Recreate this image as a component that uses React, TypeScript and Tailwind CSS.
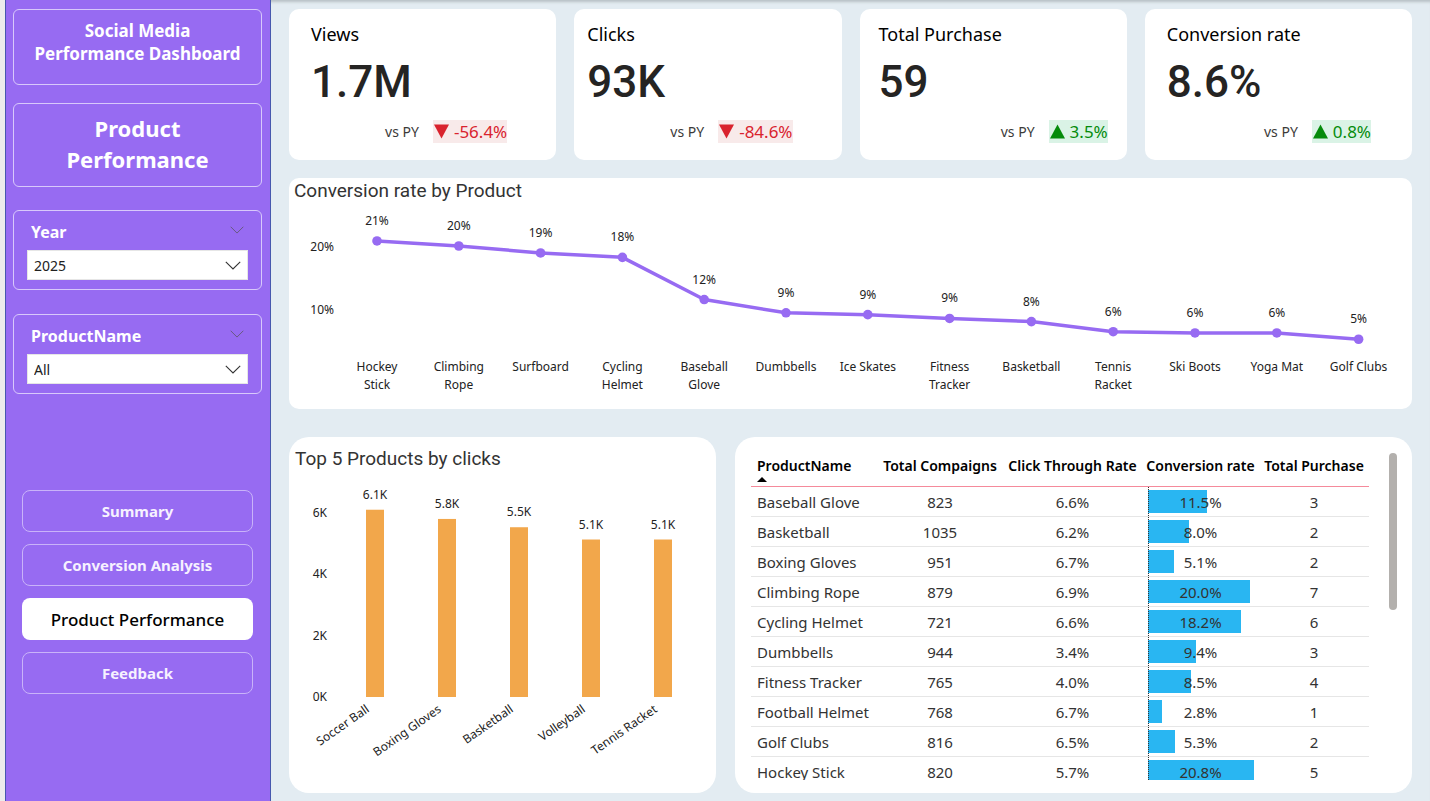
import { useState } from "react";

const kpis = [
  { title: "Views", value: "1.7M", change: "-56.4%", up: false, left: "pl-[22px]", right: "pr-[49px]" },
  { title: "Clicks", value: "93K", change: "-84.6%", up: false, left: "pl-[13px]", right: "pr-[49px]" },
  { title: "Total Purchase", value: "59", change: "3.5%", up: true, left: "pl-[19px]", right: "pr-[19px]" },
  { title: "Conversion rate", value: "8.6%", change: "0.8%", up: true, left: "pl-[22px]", right: "pr-[41px]" },
];

const conversion = [
  { name: ["Hockey", "Stick"], label: "21%", value: 20.8 },
  { name: ["Climbing", "Rope"], label: "20%", value: 20.0 },
  { name: ["Surfboard"], label: "19%", value: 18.9 },
  { name: ["Cycling", "Helmet"], label: "18%", value: 18.2 },
  { name: ["Baseball", "Glove"], label: "12%", value: 11.5 },
  { name: ["Dumbbells"], label: "9%", value: 9.4 },
  { name: ["Ice Skates"], label: "9%", value: 9.1 },
  { name: ["Fitness", "Tracker"], label: "9%", value: 8.5 },
  { name: ["Basketball"], label: "8%", value: 8.0 },
  { name: ["Tennis", "Racket"], label: "6%", value: 6.4 },
  { name: ["Ski Boots"], label: "6%", value: 6.2 },
  { name: ["Yoga Mat"], label: "6%", value: 6.2 },
  { name: ["Golf Clubs"], label: "5%", value: 5.2 },
];

const clicks = [
  { name: "Soccer Ball", label: "6.1K", value: 6.1 },
  { name: "Boxing Gloves", label: "5.8K", value: 5.8 },
  { name: "Basketball", label: "5.5K", value: 5.53 },
  { name: "Volleyball", label: "5.1K", value: 5.13 },
  { name: "Tennis Racket", label: "5.1K", value: 5.13 },
];

const rows = [
  { name: "Baseball Glove", campaigns: 823, ctr: "6.6%", rate: 11.5, purchase: 3 },
  { name: "Basketball", campaigns: 1035, ctr: "6.2%", rate: 8.0, purchase: 2 },
  { name: "Boxing Gloves", campaigns: 951, ctr: "6.7%", rate: 5.1, purchase: 2 },
  { name: "Climbing Rope", campaigns: 879, ctr: "6.9%", rate: 20.0, purchase: 7 },
  { name: "Cycling Helmet", campaigns: 721, ctr: "6.6%", rate: 18.2, purchase: 6 },
  { name: "Dumbbells", campaigns: 944, ctr: "3.4%", rate: 9.4, purchase: 3 },
  { name: "Fitness Tracker", campaigns: 765, ctr: "4.0%", rate: 8.5, purchase: 4 },
  { name: "Football Helmet", campaigns: 768, ctr: "6.7%", rate: 2.8, purchase: 1 },
  { name: "Golf Clubs", campaigns: 816, ctr: "6.5%", rate: 5.3, purchase: 2 },
  { name: "Hockey Stick", campaigns: 820, ctr: "5.7%", rate: 20.8, purchase: 5 },
];

const pages = ["Summary", "Conversion Analysis", "Product Performance", "Feedback"];

function Chevron({ className }: { className: string }) {
  return (
    <svg viewBox="0 0 16 9" fill="none" stroke="currentColor" className={className} aria-hidden="true">
      <path d="M0.8 0.8 8 8 15.2 0.8" strokeWidth="1.1" />
    </svg>
  );
}

function Slicer({ id, label, options }: { id: string; label: string; options: string[] }) {
  return (
    <div className="h-20 rounded-md border border-[#d8c9fb] px-[13px] pt-[7px]">
      <div className="flex items-center justify-between pr-1 pl-1">
        <label htmlFor={id} className="text-base leading-7 font-bold text-white">
          {label}
        </label>
        <Chevron className="mb-1 h-2 w-[14px] text-[#66597f]" />
      </div>
      <div className="relative mt-1">
        <select
          id={id}
          className="h-[30px] w-full appearance-none rounded-none border border-[#e6e6e6] bg-white px-1.5 pt-0.5 text-sm text-[#212121] outline-none"
        >
          {options.map((o) => (
            <option key={o}>{o}</option>
          ))}
        </select>
        <Chevron className="pointer-events-none absolute top-[11px] right-[7px] h-[9px] w-4 text-[#333]" />
      </div>
    </div>
  );
}

function Sidebar() {
  const [active, setActive] = useState("Product Performance");
  return (
    <aside className="w-[266px] shrink-0 border-x border-[#4658ae] bg-[#976bf2] pt-[9px] pr-2 pl-[7px]">
      <h1 className="h-[76px] rounded-md border border-[#d8c9fb] pt-[9px] text-center text-[17px] leading-[23px] font-bold text-white">
        Social Media
        <br />
        Performance Dashboard
      </h1>
      <h2 className="mt-[18px] h-21 rounded-md border border-[#d8c9fb] pt-[9px] text-center text-[22px] leading-[31px] font-bold text-white">
        Product
        <br />
        Performance
      </h2>
      <div className="mt-[23px] flex flex-col gap-6">
        <Slicer id="year" label="Year" options={["2025"]} />
        <Slicer id="product" label="ProductName" options={["All"]} />
      </div>
      <nav className="mt-24 flex flex-col gap-3 px-[9px]">
        {pages.map((p) => (
          <button
            key={p}
            type="button"
            onClick={() => setActive(p)}
            className={
              p === active
                ? "h-[42px] rounded-lg bg-white pt-0.5 text-[17px] font-medium text-black"
                : "h-[42px] rounded-lg border border-[#c9b3f9] text-[15px] font-bold text-[#f6f1ff]"
            }
          >
            {p}
          </button>
        ))}
      </nav>
    </aside>
  );
}

function KpiCard({ title, value, change, up, left, right }: (typeof kpis)[number]) {
  return (
    <section className="h-[151px] rounded-[10px] bg-white pt-[11px]">
      <h3 className={`text-lg leading-7 text-black ${left}`}>{title}</h3>
      <p className={`pt-1 font-[Roboto] text-[44px] leading-[60px] font-medium text-[#252423] ${left}`}>{value}</p>
      <div className={`mt-2 flex items-center justify-end gap-[14px] ${right}`}>
        <span className="text-sm text-[#3b3a39]">vs PY</span>
        <span
          className={
            up
              ? "flex h-[23px] items-center gap-[5px] bg-[#daf3e6] pl-px text-[17px] text-[#058b0b]"
              : "flex h-[23px] items-center gap-[5px] bg-[#f8eaea] pl-px text-[17px] text-[#d9232e]"
          }
        >
          <svg viewBox="0 0 14 14" className="size-[15px] fill-current" aria-hidden="true">
            <path d={up ? "M7 0.5 14 13.5H0Z" : "M0 0.5H14L7 13.5Z"} />
          </svg>
          {change}
        </span>
      </div>
    </section>
  );
}

function LineChart() {
  const x = (i: number) => 88 + i * 81.8;
  const y = (v: number) => 169 - v * 6.3;
  const points = conversion.map((c, i) => `${x(i)},${y(c.value)}`).join(" ");
  return (
    <svg viewBox="0 0 1123 206" className="block w-full fill-[#222] text-xs" role="img" aria-label="Conversion rate by Product">
      {[20, 10].map((t) => (
        <text key={t} x="45" y={y(t) + 5} textAnchor="end">
          {t}%
        </text>
      ))}
      <polyline points={points} fill="none" stroke="#976bf2" strokeWidth="3.5" strokeLinejoin="round" />
      {conversion.map((c, i) => (
        <g key={c.name.join(" ")} textAnchor="middle">
          <circle cx={x(i)} cy={y(c.value)} r="4.8" fill="#976bf2" />
          <text x={x(i)} y={y(c.value) - 16}>
            {c.label}
          </text>
          {c.name.map((line, n) => (
            <text key={line} x={x(i)} y={168 + n * 18}>
              {line}
            </text>
          ))}
        </g>
      ))}
    </svg>
  );
}

function BarChart() {
  const x = (i: number) => 86 + i * 72;
  const y = (v: number) => 224 - v * 30.7;
  return (
    <svg viewBox="0 0 427 320" className="block w-full fill-[#222] text-xs" role="img" aria-label="Top 5 Products by clicks">
      {[0, 2, 4, 6].map((t) => (
        <text key={t} x="38" y={y(t) + 4} textAnchor="end">
          {t}K
        </text>
      ))}
      {clicks.map((c, i) => (
        <g key={c.name}>
          <rect x={x(i) - 9} y={y(c.value)} width="18" height={224 - y(c.value)} fill="#f2a74b" />
          <text x={x(i)} y={y(c.value) - 11} textAnchor="middle">
            {c.label}
          </text>
          <text transform={`translate(${x(i) - 5} 238) rotate(-35)`} textAnchor="end">
            {c.name}
          </text>
        </g>
      ))}
    </svg>
  );
}

function ProductTable() {
  return (
    <section className="flex h-[356px] items-start gap-5 rounded-[20px] bg-white pt-4 pr-[15px] pl-4">
      <div className="h-[327px] min-w-0 flex-1 overflow-hidden">
        <table className="w-full table-fixed border-separate border-spacing-0 text-center text-[15px] whitespace-nowrap text-[#333] [&_td]:border-b [&_td]:border-[#e6e6e6] [&_td]:pt-px [&_th]:border-b [&_th]:border-[#f58a9b]">
          <colgroup>
            <col className="w-[126px]" />
            <col className="w-[126px]" />
            <col className="w-[139px]" />
            <col className="w-[117px]" />
            <col className="w-[110px]" />
          </colgroup>
          <thead>
            <tr className="align-top text-sm leading-[22px] text-black">
              <th className="pt-0.5 pl-1.5 text-left font-semibold">
                ProductName
                <svg viewBox="0 0 10 5" className="mb-1 block h-[5px] w-2.5" aria-hidden="true">
                  <path d="M0 5 5 0 10 5Z" />
                </svg>
              </th>
              <th className="pt-0.5 font-semibold">Total Compaigns</th>
              <th className="pt-0.5 font-semibold">Click Through Rate</th>
              <th className="pt-0.5 font-semibold">Conversion rate</th>
              <th className="pt-0.5 font-semibold">Total Purchase</th>
            </tr>
          </thead>
          <tbody>
            {rows.map((r) => (
              <tr key={r.name} className="leading-7">
                <td className="pl-1.5 text-left">{r.name}</td>
                <td>{r.campaigns}</td>
                <td>{r.ctr}</td>
                <td>
                  <div className="relative">
                    <div
                      className="absolute top-0.5 left-1.5 h-[23px] bg-[#29b6f2]"
                      style={{ width: `${r.rate * 4.36}%` }}
                    />
                    <div className="absolute -top-px bottom-0 left-1.5 border-l border-dotted border-[#333]" />
                    <span className="relative">{r.rate.toFixed(1)}%</span>
                  </div>
                </td>
                <td>{r.purchase}</td>
              </tr>
            ))}
          </tbody>
        </table>
      </div>
      <div className="h-[157px] w-2 shrink-0 rounded-full bg-[#b3b0ad]" />
    </section>
  );
}

export default function App() {
  return (
    <div className="flex min-h-screen border-l-5 border-[#ececec] bg-[#e3ecf2] font-['Noto_Sans',sans-serif] shadow-[inset_0_4px_3px_-2px_#b8c0c4]">
      <Sidebar />
      <main className="min-w-0 flex-1 px-[18px] pt-[9px] pb-2">
        <div className="grid grid-cols-4 gap-[18px]">
          {kpis.map((k) => (
            <KpiCard key={k.title} {...k} />
          ))}
        </div>
        <section className="mt-[18px] rounded-[10px] bg-white">
          <h3 className="pl-[5px] font-[Roboto] text-[19px] leading-[25px] text-[#333]">Conversion rate by Product</h3>
          <LineChart />
        </section>
        <div className="mt-7 grid grid-cols-[427fr_677fr] gap-[19px]">
          <section className="rounded-[20px] bg-white">
            <h3 className="pt-2 pl-[6px] font-[Roboto] text-[19px] leading-7 text-[#333]">Top 5 Products by clicks</h3>
            <BarChart />
          </section>
          <ProductTable />
        </div>
      </main>
    </div>
  );
}
